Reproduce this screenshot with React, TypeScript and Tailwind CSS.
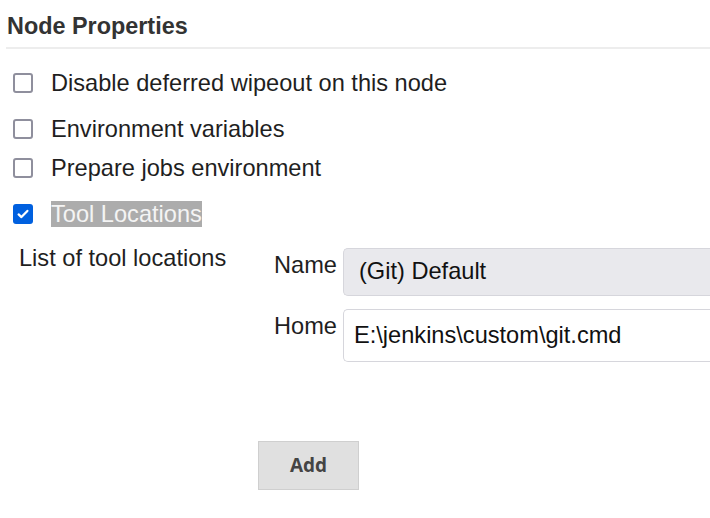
import React from "react";

function Box({ checked }: { checked?: boolean }) {
  if (checked) {
    return (
      <span className="flex h-[20px] w-[20px] shrink-0 items-center justify-center rounded-[3px] bg-[#0060df]">
        <svg viewBox="0 0 16 16" className="h-[14px] w-[14px]" fill="none" stroke="white" strokeWidth="2.6" strokeLinecap="round" strokeLinejoin="round">
          <path d="M3 8.5l3.2 3L13 4.5" />
        </svg>
      </span>
    );
  }
  return <span className="h-[20px] w-[20px] shrink-0 rounded-[3px] border-2 border-[#8f8f9d] bg-white" />;
}

export default function App() {
  return (
    <div className="h-[518px] w-[710px] overflow-hidden bg-white text-[#1f1f1f]" style={{ fontFamily: '"Liberation Sans", Arial, sans-serif' }}>
      <div className="pl-[7px] pt-[13px]">
        <h2 className="text-[23.4px] font-bold leading-[27px] text-[#333]">Node Properties</h2>
      </div>
      <div className="ml-[6px] mt-[7px] h-[2px] bg-[#ededed]" />
      <div className="flex flex-col pl-[13px] pt-[21px]">
        <label className="flex h-[26px] items-center gap-[18px]">
          <Box />
          <span className="text-[23.6px] leading-[26px]">Disable deferred wipeout on this node</span>
        </label>
        <label className="mt-[20px] flex h-[26px] items-center gap-[18px]">
          <Box />
          <span className="text-[23.6px] leading-[26px]">Environment variables</span>
        </label>
        <label className="mt-[13px] flex h-[26px] items-center gap-[18px]">
          <Box />
          <span className="text-[23.6px] leading-[26px]">Prepare jobs environment</span>
        </label>
        <label className="mt-[20px] flex h-[26px] items-center gap-[18px]">
          <Box checked />
          <span className="bg-[#acacac] text-[23.6px] leading-[26px] text-[#f4f4f4]">Tool Locations</span>
        </label>
      </div>
      <div className="flex pl-[19px] pt-[17px]">
        <div className="w-[255px] shrink-0 pt-[1px] text-[23.6px] leading-[26px]">List of tool locations</div>
        <div className="flex flex-1 flex-col pt-[4px]">
          <div className="flex">
            <div className="w-[69px] shrink-0 pt-[4px] text-[23.6px] leading-[26px]">Name</div>
            <div className="flex h-[48px] flex-1 items-center rounded-l-[5px] border border-r-0 border-[#d6d6dc] bg-[#e9e9ed] pl-[15px] text-[23.6px] text-[#111]">(Git) Default</div>
          </div>
          <div className="mt-[13px] flex">
            <div className="w-[69px] shrink-0 pt-[4px] text-[23.6px] leading-[26px]">Home</div>
            <div className="flex h-[53px] flex-1 items-center rounded-l-[5px] border border-r-0 border-[#d6d6dc] bg-white pl-[10px] text-[23.6px] text-[#111]">E:\jenkins\custom\git.cmd</div>
          </div>
        </div>
      </div>
      <div className="pl-[258px] pt-[79px]">
        <button className="h-[49px] w-[101px] border border-[#cfcfcf] bg-[#e0e0e0] text-[19px] font-bold text-[#444]" style={{ fontFamily: '"Open Sans", "Liberation Sans", sans-serif' }}>Add</button>
      </div>
    </div>
  );
}
